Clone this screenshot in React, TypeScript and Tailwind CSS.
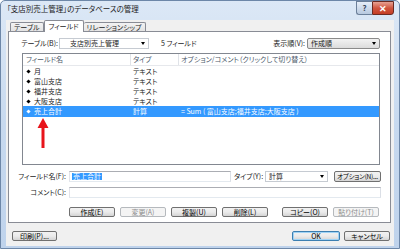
import React from "react";

const Btn = ({
  children,
  className = "",
  disabled = false,
  def = false,
}: {
  children: React.ReactNode;
  className?: string;
  disabled?: boolean;
  def?: boolean;
}) => (
  <div
    className={
      "flex items-center justify-center whitespace-nowrap rounded-[2px] border text-[7px] leading-none " +
      (disabled
        ? "border-[#b5b9bd] bg-[#f4f4f4] text-[#8d8d8d] "
        : def
        ? "border-[#3c7fb1] bg-gradient-to-b from-[#f2f2f2] via-[#ebebeb] to-[#d4d4d4] text-black shadow-[inset_0_0_0_1px_#9fd3f5] "
        : "border-[#707070] bg-gradient-to-b from-[#f2f2f2] via-[#ebebeb] to-[#d4d4d4] text-black ") +
      className
    }
  >
    {children}
  </div>
);

const Arrow = () => (
  <div className="h-0 w-0 border-l-[2.5px] border-r-[2.5px] border-t-[3px] border-l-transparent border-r-transparent border-t-black" />
);

const Bullet = ({ light = false }: { light?: boolean }) => (
  <div className={"h-[3px] w-[3px] rotate-45 " + (light ? "bg-white" : "bg-black")} />
);

const rows = [
  { name: "月", type: "テキスト" },
  { name: "富山支店", type: "テキスト" },
  { name: "福井支店", type: "テキスト" },
  { name: "大阪支店", type: "テキスト" },
];

export default function App() {
  return (
    <div className="w-[400px] h-[249px] whitespace-nowrap font-['Noto_Sans_CJK_JP',sans-serif] [font-feature-settings:'palt'] text-[#1a1a1a] overflow-hidden">
      <div className="flex h-full w-full flex-col rounded-t-[5px] border border-[#6d87a8] bg-gradient-to-b from-[#dce8f6] via-[#c7d9ef] to-[#bfd3ec]">
        {/* title bar */}
        <div className="flex h-[19px] items-start">
          <div className="pl-[6px] pt-[4px] text-[7.5px] leading-none">「支店別売上管理」のデータベースの管理</div>
          <div className="flex-1" />
          <div className="mr-[5px] flex">
            <div className="flex h-[14px] w-[16px] items-center justify-center rounded-bl-[3px] border border-r-0 border-[#6b7f99] bg-gradient-to-b from-[#e6eef8] to-[#b8c9df] text-[8px] font-bold leading-none text-[#3b4a5e]">
              ?
            </div>
            <div className="flex h-[14px] w-[22px] items-center justify-center rounded-br-[3px] border border-[#6b2a22] bg-gradient-to-b from-[#e6a193] via-[#d0553f] to-[#c43d25] text-[9px] font-bold leading-none text-white">
              ✕
            </div>
          </div>
        </div>
        {/* client */}
        <div className="mx-[5px] flex h-[226px] flex-col bg-[#f0f0f0]">
          {/* tabs */}
          <div className="flex h-[11px] items-end pl-[4px]">
            <div className="flex h-[9px] items-center rounded-t-[2px] border border-b-0 border-[#898c95] bg-gradient-to-b from-[#f3f3f3] to-[#e3e3e3] px-[3px] text-[7px] leading-none">
              テーブル
            </div>
            <div className="relative top-[1px] z-10 flex h-[12px] items-center rounded-t-[2px] border border-b-0 border-[#898c95] bg-white px-[4px] text-[7px] leading-none">
              フィールド
            </div>
            <div className="flex h-[9px] items-center rounded-t-[2px] border border-b-0 border-l-0 border-[#898c95] bg-gradient-to-b from-[#f3f3f3] to-[#e3e3e3] px-[3px] text-[7px] leading-none">
              リレーションシップ
            </div>
          </div>
          {/* panel */}
          <div className="ml-[2px] flex h-[192px] w-[383px] flex-col border border-[#898c95] bg-white">
            {/* row 1 */}
            <div className="mt-[6px] flex h-[11px] items-center text-[7px] leading-none">
              <div className="w-[49px] text-right">テーブル(B):</div>
              <div className="ml-[1px] flex h-[11px] w-[90px] items-center justify-between border border-[#c6cbd2] bg-white pl-[10px] pr-[3px]">
                <span>支店別売上管理</span>
                <Arrow />
              </div>
              <div className="ml-[12px]">5 フィールド</div>
              <div className="flex-1" />
              <div className="mr-[2px]">表示順(V):</div>
              <div className="flex h-[11px] w-[73px] items-center justify-between rounded-[2px] border border-[#8a8a8a] bg-gradient-to-b from-[#f2f2f2] to-[#dcdcdc] pl-[3px] pr-[3px]">
                <span>作成順</span>
                <Arrow />
              </div>
              <div className="w-[10px]" />
            </div>
            {/* list */}
            <div className="relative ml-[13px] mt-[4px] flex h-[112px] w-[358px] flex-col border border-[#828790] bg-white text-[7px] leading-none">
              <div className="flex h-[12px] items-center border-b border-[#e6e8ec] text-[#4d5a6b]">
                <div className="w-[107px] pl-[3px]">フィールド名</div>
                <div className="h-full w-px bg-[#e0e3e8]" />
                <div className="w-[47px] pl-[2px]">タイプ</div>
                <div className="h-full w-px bg-[#e0e3e8]" />
                <div className="pl-[2px]">オプション/コメント（クリックして切り替え）</div>
              </div>
              {rows.map((r) => (
                <div key={r.name} className="flex h-[10px] items-center">
                  <div className="flex w-[108px] items-center pl-[4px]">
                    <Bullet />
                    <span className="ml-[4px]">{r.name}</span>
                  </div>
                  <div className="pl-[2px]">{r.type}</div>
                </div>
              ))}
              <div className="flex h-[11px] items-center bg-[#3399ff] text-white">
                <div className="flex w-[108px] items-center pl-[4px]">
                  <Bullet light />
                  <span className="ml-[4px]">売上合計</span>
                </div>
                <div className="w-[50px] pl-[2px]">計算</div>
                <div>= Sum ( 富山支店;福井支店;大阪支店 )</div>
              </div>
              <svg
                className="absolute left-[14px] top-[64px]"
                width="12"
                height="30"
                viewBox="0 0 12 30"
              >
                <polygon points="6,0 11.5,10 7.5,10 7.5,30 4.5,30 4.5,10 0.5,10" fill="#e8141b" />
              </svg>
            </div>
            {/* field name row */}
            <div className="mt-[6px] flex h-[11px] items-center text-[7px] leading-none">
              <div className="w-[57px] text-right">フィールド名(F):</div>
              <div className="ml-[3px] flex h-[11px] w-[162px] items-center border border-[#abadb3] border-b-[#e3e9ef] border-l-[#e2e3ea] border-r-[#dbdfe6] bg-white pl-[2px]">
                <span className="bg-[#3399ff] px-[1px] text-white">売上合計</span>
              </div>
              <div className="ml-[3px] w-[30px]">タイプ(Y):</div>
              <div className="ml-[1px] flex h-[11px] w-[63px] items-center justify-between border border-[#c6cbd2] bg-white pl-[3px] pr-[3px]">
                <span>計算</span>
                <Arrow />
              </div>
              <Btn className="ml-[6px] h-[11px] w-[47px]">
                <span className="text-[6.5px] tracking-[-0.2px]">オプション(N)...</span>
              </Btn>
            </div>
            {/* comment row */}
            <div className="mt-[5px] flex h-[11px] items-center text-[7px] leading-none">
              <div className="w-[57px] text-right">コメント(C):</div>
              <div className="ml-[3px] h-[11px] w-[312px] border border-[#abadb3] border-b-[#e3e9ef] border-l-[#e2e3ea] border-r-[#dbdfe6] bg-white" />
            </div>
            {/* buttons */}
            <div className="mt-[9px] flex h-[10px] items-center">
              <Btn className="ml-[60px] h-[10px] w-[46px]">作成(E)</Btn>
              <Btn className="ml-[5px] h-[10px] w-[46px]" disabled>
                変更(A)
              </Btn>
              <Btn className="ml-[5px] h-[10px] w-[46px]">複製(U)</Btn>
              <Btn className="ml-[5px] h-[10px] w-[46px]">削除(L)</Btn>
              <Btn className="ml-[14px] h-[10px] w-[46px]">コピー(O)</Btn>
              <Btn className="ml-[5px] h-[10px] w-[46px]" disabled>
                貼り付け(T)
              </Btn>
            </div>
          </div>
          {/* bottom */}
          <div className="mt-[8px] flex h-[10px] items-center">
            <Btn className="ml-[6px] h-[10px] w-[45px]">印刷(P)...</Btn>
            <div className="flex-1" />
            <Btn def className="h-[10px] w-[48px]">
              OK
            </Btn>
            <Btn className="ml-[4px] mr-[4px] h-[10px] w-[46px]">キャンセル</Btn>
          </div>
        </div>
      </div>
    </div>
  );
}
